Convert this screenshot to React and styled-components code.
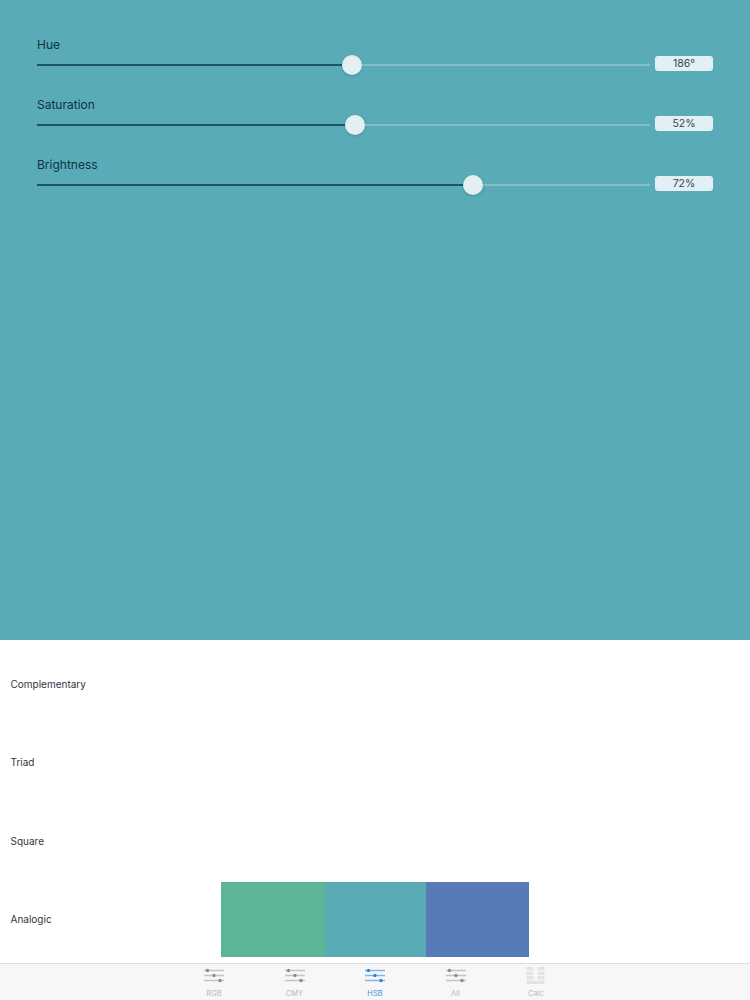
import styled, { createGlobalStyle } from 'styled-components';

const GlobalStyle = createGlobalStyle`
  html, body {
    margin: 0;
    padding: 0;
    background: #fff;
    font-family: "Inter", "Liberation Sans", sans-serif;
  }
`;

const Page = styled.div`
  width: 750px;
  height: 1000px;
  display: flex;
  flex-direction: column;
  overflow: hidden;
`;

const ColorPanel = styled.section`
  height: 640px;
  flex-shrink: 0;
  box-sizing: border-box;
  padding: 36px 37px 0;
  background: #59acb7;
  display: flex;
  flex-direction: column;
  gap: 23px;
`;

const SliderRow = styled.div`
  display: flex;
  flex-direction: column;
  height: 37px;
`;

const SliderLabel = styled.div`
  font-size: 12px;
  line-height: 17px;
  color: #10323f;
`;

const SliderLine = styled.div`
  display: flex;
  align-items: center;
  gap: 5px;
  height: 24px;
  margin-top: 3px;
`;

const Track = styled.div`
  position: relative;
  width: 613px;
  height: 2px;
  background: rgba(225, 238, 242, 0.3);
`;

const TrackFill = styled.div`
  height: 2px;
  background: #1d5563;
`;

const Thumb = styled.div`
  position: absolute;
  top: -9px;
  width: 20px;
  height: 20px;
  margin-left: -10px;
  border-radius: 50%;
  background: #e2eff3;
  box-shadow: 0 1px 3px rgba(0, 0, 0, 0.2);
`;

const ValueBox = styled.div`
  width: 58px;
  height: 15px;
  margin-top: -2px;
  border-radius: 3px;
  background: #e2eff5;
  color: #33474d;
  font-size: 10.5px;
  line-height: 15px;
  text-align: center;
`;

const SchemeList = styled.section`
  flex: 1;
  display: flex;
  flex-direction: column;
  padding-top: 5px;
`;

const SchemeRow = styled.div`
  height: 78.3px;
  flex-shrink: 0;
  display: flex;
  align-items: center;
  padding-left: 10.5px;
`;

const SchemeName = styled.div`
  width: 210.5px;
  font-size: 10px;
  color: #33363a;
`;

const Swatches = styled.div`
  display: flex;
  height: 75px;
`;

const Swatch = styled.div`
  width: ${props => props.$w}px;
  background: ${props => props.$color};
`;

const TabBar = styled.nav`
  height: 37px;
  flex-shrink: 0;
  box-sizing: border-box;
  border-top: 1px solid #dcdcdf;
  background: #f7f7f8;
  display: grid;
  grid-template-columns: repeat(5, 80.5px);
  justify-content: center;
`;

const Tab = styled.div`
  display: flex;
  flex-direction: column;
  align-items: center;
  padding-top: 3px;
  color: ${props => props.$active ? '#3e95dd' : '#b8b9bc'};
`;

const TabLabel = styled.span`
  font-size: 7.5px;
  line-height: 9px;
  margin-top: 4px;
`;

const SliderIcon = ({ active }) => {
  const line = active ? '#7db8e8' : '#c4c4c6';
  const dot = active ? '#2b84d6' : '#8c8c8f';
  return (
    <svg width="22" height="18" viewBox="0 0 22 18">
      <path d="M1 3.5h20M1 8.5h20M1 13.5h20" stroke={line} strokeWidth="1.5" />
      <circle cx="4.5" cy="3.5" r="1.7" fill={dot} />
      <circle cx="11" cy="8.5" r="1.7" fill={dot} />
      <circle cx="17" cy="13.5" r="1.7" fill={dot} />
    </svg>
  );
};

const CalcIcon = () => (
  <svg width="20" height="18" viewBox="0 0 20 18">
    <g fill="#e6e6e8" stroke="#d6d6d8" strokeWidth="0.5">
      <rect x="1" y="0.5" width="6" height="2.5" />
      <rect x="12" y="0.5" width="6" height="2.5" />
      <rect x="1" y="5" width="6" height="2.5" />
      <rect x="12" y="5" width="6" height="2.5" />
      <rect x="1" y="9.5" width="6" height="2.5" />
      <rect x="12" y="9.5" width="6" height="2.5" />
      <rect x="1" y="14" width="17" height="2.5" />
    </g>
  </svg>
);

const sliders = [
  { label: 'Hue', pct: 51.4, value: '186°' },
  { label: 'Saturation', pct: 51.8, value: '52%' },
  { label: 'Brightness', pct: 71.1, value: '72%' },
];

const schemes = [
  { name: 'Complementary', colors: [] },
  { name: 'Triad', colors: [] },
  { name: 'Square', colors: [] },
  {
    name: 'Analogic',
    colors: [
      { color: '#5cb594', w: 104 },
      { color: '#59abb6', w: 101 },
      { color: '#577bb6', w: 103 },
    ],
  },
];

const tabs = ['RGB', 'CMY', 'HSB', 'All', 'Calc'];

export default function App() {
  return (
    <Page>
      <GlobalStyle />
      <ColorPanel>
        {sliders.map(s => (
          <SliderRow key={s.label}>
            <SliderLabel>{s.label}</SliderLabel>
            <SliderLine>
              <Track>
                <TrackFill style={{ width: `${s.pct}%` }} />
                <Thumb style={{ left: `${s.pct}%` }} />
              </Track>
              <ValueBox>{s.value}</ValueBox>
            </SliderLine>
          </SliderRow>
        ))}
      </ColorPanel>
      <SchemeList>
        {schemes.map(s => (
          <SchemeRow key={s.name}>
            <SchemeName>{s.name}</SchemeName>
            {s.colors.length > 0 && (
              <Swatches>
                {s.colors.map(c => (
                  <Swatch key={c.color} $color={c.color} $w={c.w} />
                ))}
              </Swatches>
            )}
          </SchemeRow>
        ))}
      </SchemeList>
      <TabBar>
        {tabs.map(t => (
          <Tab key={t} $active={t === 'HSB'}>
            {t === 'Calc' ? <CalcIcon /> : <SliderIcon active={t === 'HSB'} />}
            <TabLabel>{t}</TabLabel>
          </Tab>
        ))}
      </TabBar>
    </Page>
  );
}
